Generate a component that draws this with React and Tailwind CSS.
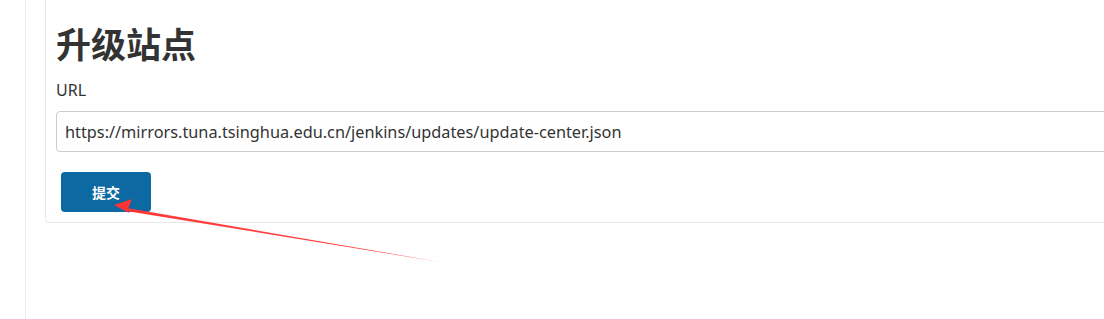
export default function App() {
  return (
    <div className="relative flex h-[319px] w-[1104px] overflow-hidden bg-white font-['Noto_Sans','Noto_Sans_CJK_SC',sans-serif] text-[#333]">
      <div className="w-[26px] shrink-0 border-r border-[#eeeeee]" />
      <div className="flex-1 pl-[19px]">
        <div className="-mt-[10px] w-[1100px] rounded-b-[4px] border border-t-0 border-[#e8e8e8] pb-[10px] pl-[10px] pt-[10px]">
          <h1 className="mt-[21px] text-[35px] font-bold leading-[48px] text-[#333]">升级站点</h1>
          <label className="mt-[10px] block text-[16px] leading-[22px]">URL</label>
          <input
            type="text"
            readOnly
            defaultValue="https://mirrors.tuna.tsinghua.edu.cn/jenkins/updates/update-center.json"
            className="mt-[10px] block h-[41px] w-[1100px] rounded-[4px] border border-[#cccccc] px-[8px] text-[16.3px] text-[#333] outline-none"
          />
          <button className="ml-[5px] mt-[20px] h-[40px] w-[90px] rounded-[4px] bg-[#0d69a1] text-[14px] font-bold text-white">
            提交
          </button>
        </div>
      </div>
      <svg className="pointer-events-none absolute left-0 top-0" width="1104" height="319">
        <polygon points="440,262 127,208 126,211" fill="#f33" opacity="0.95" />
        <polygon points="114,205 132,199 128,209 129,213" fill="#f33" />
      </svg>
    </div>
  );
}
